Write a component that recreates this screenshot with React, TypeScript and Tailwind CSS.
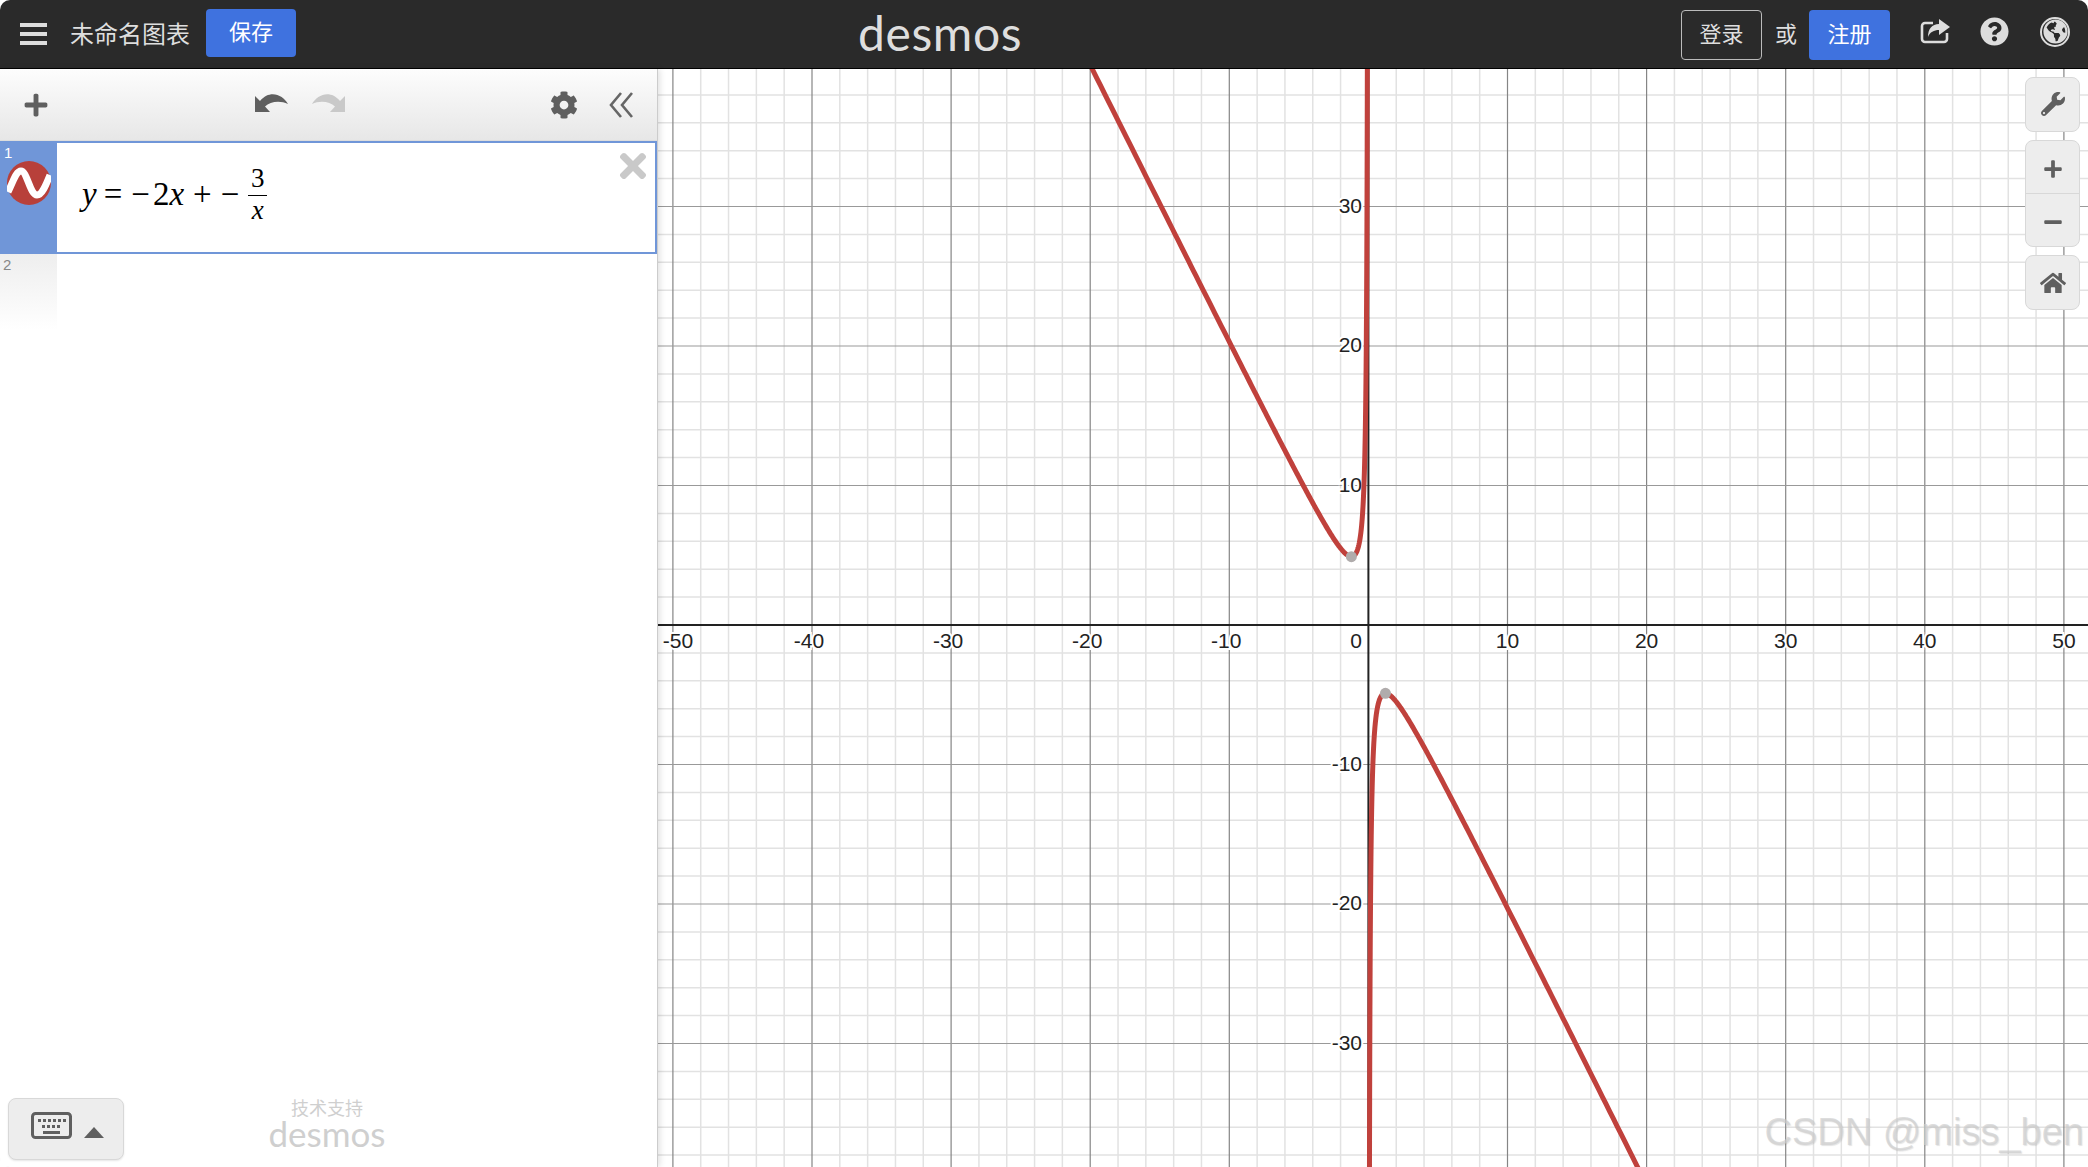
import { FaCog, FaHome, FaMinus, FaPlus, FaQuestionCircle, FaTimes, FaWrench, FaGlobeAmericas } from "react-icons/fa";

const X0 = 1368.4;
const Y0 = 625;
const SX = 13.91;
const SY = 13.95;

const px = (v: number) => X0 + v * SX;
const py = (v: number) => Y0 - v * SY;
const f = (x: number) => -2 * x - 3 / x;

function range(from: number, to: number, step: number) {
  const out: number[] = [];
  for (let v = from; v <= to; v += step) out.push(v);
  return out;
}

function branch(start: number, end: number) {
  // geometric steps, the curve bends hard near zero
  const pts: string[] = [];
  const n = 400;
  for (let i = 0; i <= n; i++) {
    const x = start * Math.pow(end / start, i / n);
    pts.push(`${px(x).toFixed(2)},${py(f(x)).toFixed(2)}`);
  }
  return "M" + pts.join("L");
}

function Graph() {
  const minorX = range(-50, 50, 2).filter((v) => v % 10 !== 0);
  const minorY = range(-38, 38, 2).filter((v) => v % 10 !== 0);
  const majorX = range(-50, 50, 10).filter((v) => v !== 0);
  const majorY = [-30, -20, -10, 10, 20, 30];
  const label = { fontFamily: "Liberation Sans, sans-serif", fontSize: 21, fill: "#222", stroke: "#fff", strokeWidth: 4, paintOrder: "stroke" } as const;

  return (
    <svg className="block w-full h-full" viewBox="658 69 1430 1098">
      <rect x="658" y="69" width="1430" height="1098" fill="#fff" />
      {minorX.map((v) => (
        <line key={v} x1={px(v)} x2={px(v)} y1="69" y2="1167" stroke="#e2e2e2" strokeWidth="1.5" />
      ))}
      {minorY.map((v) => (
        <line key={v} y1={py(v)} y2={py(v)} x1="658" x2="2088" stroke="#e2e2e2" strokeWidth="1.5" />
      ))}
      {majorX.map((v) => (
        <line key={v} x1={px(v)} x2={px(v)} y1="69" y2="1167" stroke="#858585" strokeWidth="1.2" />
      ))}
      {majorY.map((v) => (
        <line key={v} y1={py(v)} y2={py(v)} x1="658" x2="2088" stroke="#999999" strokeWidth="1.2" />
      ))}
      <line x1="658" x2="2088" y1={Y0} y2={Y0} stroke="#222" strokeWidth="2" />
      <line x1={X0} x2={X0} y1="69" y2="1167" stroke="#222" strokeWidth="2" />

      {majorX.map((v) => (
        <text key={v} x={v === -50 ? 678 : v < 0 ? px(v) - 3 : px(v)} y="648" textAnchor="middle" {...label}>
          {v}
        </text>
      ))}
      <text x="1356" y="648" textAnchor="middle" {...label}>0</text>
      {majorY.map((v) => (
        <text key={v} x="1362" y={py(v) + 6} textAnchor="end" {...label}>
          {v}
        </text>
      ))}

      <path d={branch(-21, -0.07)} fill="none" stroke="#c0413c" strokeWidth="5" />
      <path d={branch(0.07, 32)} fill="none" stroke="#c0413c" strokeWidth="5" />
      <circle cx={px(-1.2247)} cy={py(4.899)} r="5.5" fill="#b0acac" />
      <circle cx={px(1.2247)} cy={py(-4.899)} r="5.5" fill="#b0acac" />
    </svg>
  );
}

function Chevrons() {
  return (
    <svg width="26" height="28" viewBox="0 0 26 28" fill="none" stroke="#666" strokeWidth="2.6">
      <path d="M13 2 3 14l10 12" />
      <path d="M24 2 14 14l10 12" />
    </svg>
  );
}

function UndoIcon({ className }: { className?: string }) {
  return (
    <svg width="33" height="20" viewBox="0 0 33 20" fill="currentColor" className={className}>
      <path d="M0 4V20H15L10 14.5C15 9.5 25 8 33 12 28 3 15-3 5 9Z" />
    </svg>
  );
}

function ShareIcon() {
  return (
    <svg width="30" height="25" viewBox="0 0 30 25" className="text-[#ddd]">
      <path d="M13 4H5a3 3 0 0 0-3 3v13a3 3 0 0 0 3 3h19a3 3 0 0 0 3-3v-6" fill="none" stroke="currentColor" strokeWidth="2.6" />
      <path d="M19 0 30 8 19 16V11C14 11 10 13 8 18 8 10 12 5 19 5Z" fill="currentColor" />
    </svg>
  );
}

function FnIcon() {
  return (
    <svg width="44" height="44" viewBox="0 0 44 44" className="mx-auto">
      <circle cx="22" cy="22" r="22" fill="#b8403a" />
      <path d="M1 31C6 21 9 10 14 10c6 0 9 24 16 24 5 0 9-10 13-20" fill="none" stroke="#fff" strokeWidth="7" />
    </svg>
  );
}

function KeyboardIcon() {
  return (
    <svg width="41" height="27" viewBox="0 0 41 27">
      <rect x="1.5" y="1.5" width="38" height="24" rx="3" fill="none" stroke="#5f5f5f" strokeWidth="3" />
      {[7, 12, 17, 22, 27, 32].map((x) => (
        <rect key={x} x={x} y="7" width="3" height="3" fill="#5f5f5f" />
      ))}
      {[11, 16, 21, 26].map((x) => (
        <rect key={x} x={x} y="13" width="3" height="3" fill="#5f5f5f" />
      ))}
      <rect x="12" y="19" width="17" height="3" fill="#5f5f5f" />
    </svg>
  );
}

function Expression() {
  return (
    <div className="flex items-center ml-[25px] mt-[-6px] text-[33px] text-black font-['Liberation_Serif',serif] leading-none">
      <i>y</i>
      <span className="ml-[7px]">=</span>
      <span className="ml-[9px]">−</span>
      <span className="ml-[3px]">2</span>
      <i>x</i>
      <span className="ml-[9px]">+</span>
      <span className="ml-[9px]">−</span>
      <div className="ml-[9px] flex flex-col items-center w-[19px]">
        <span className="text-[27px] pb-[3px]">3</span>
        <div className="w-full h-px bg-black" />
        <i className="text-[27px] pt-[1px]">x</i>
      </div>
    </div>
  );
}

function MapButton({ children, className }: { children: React.ReactNode; className?: string }) {
  return <div className={`w-full flex items-center justify-center text-[#5f5f5f] ${className ?? ""}`}>{children}</div>;
}

export default function App() {
  return (
    <div className="w-[2088px] h-[1167px] flex flex-col overflow-hidden rounded-[10px] bg-white font-['Liberation_Sans','Noto_Sans_CJK_SC',sans-serif]">
      <header className="relative h-[69px] shrink-0 flex items-center bg-[#2a2a2a] border-b border-black text-[#dedede]">
        <div className="ml-[20px] w-[27px] flex flex-col gap-[5px]">
          <div className="h-[4px] bg-[#ddd]" />
          <div className="h-[4px] bg-[#ddd]" />
          <div className="h-[4px] bg-[#ddd]" />
        </div>
        <span className="ml-[23px] mt-[1px] text-[24px]">未命名图表</span>
        <button className="ml-[16px] w-[90px] h-[48px] mt-[-3px] rounded-[4px] bg-[#3f72df] text-white text-[22px]">保存</button>

        <div className="absolute left-[858px] top-[8px] text-[48px] leading-[50px] tracking-[0.6px] text-[#dedede] font-['Lato',sans-serif]">desmos</div>

        <div className="ml-auto flex items-center mt-[1px]">
          <button className="w-[81px] h-[50px] rounded-[4px] border border-[#bbb] text-[22px]">登录</button>
          <span className="ml-[13px] text-[22px]">或</span>
          <button className="ml-[12px] w-[81px] h-[50px] rounded-[4px] bg-[#3f72df] text-white text-[22px]">注册</button>
          <div className="ml-[30px] mt-[-6px]">
            <ShareIcon />
          </div>
          <FaQuestionCircle className="ml-[30px] mt-[-6px] text-[#ddd]" size={29} />
          <div className="ml-[31px] mr-[18px] mt-[-6px] w-[30px] h-[30px] rounded-full border-2 border-[#ddd] flex items-center justify-center">
            <FaGlobeAmericas className="text-[#ddd]" size={25} />
          </div>
        </div>
      </header>

      <main className="flex-1 min-h-0 flex">
        <aside className="relative z-10 w-[658px] shrink-0 flex flex-col bg-white border-r border-[#ccc] shadow-[2px_0_6px_rgba(0,0,0,0.12)]">
          <div className="h-[72px] shrink-0 flex items-center bg-linear-to-b from-[#fdfdfd] to-[#e7e7e7] border-b border-[#ddd] text-[#5f5f5f]">
            <FaPlus className="ml-[23px]" size={26} />
            <UndoIcon className="ml-[206px] mt-[-5px]" />
            <UndoIcon className="ml-[24px] mt-[-5px] -scale-x-100 text-[#c9c9c9]" />
            <FaCog className="ml-[205px]" size={28} />
            <div className="ml-[30px]">
              <Chevrons />
            </div>
          </div>

          <div className="h-[113px] shrink-0 flex border-2 border-l-0 border-[#7096d8]">
            <div className="w-[57px] shrink-0 bg-[#7096d8] text-white text-[15px] leading-[16px]">
              <div className="pl-[4px] pt-[2px]">1</div>
              <FnIcon />
            </div>
            <div className="flex-1 flex items-center justify-between">
              <Expression />
              <FaTimes className="mb-[64px] mr-[3px] text-[#c9c9c9]" size={38} />
            </div>
          </div>

          <div className="h-[76px] w-[57px] shrink-0 bg-linear-to-b from-[#eeeeee] to-white text-[#888] text-[15px] leading-[16px] pl-[3px] pt-[3px]">2</div>

          <div className="mt-auto h-[69px] flex items-start">
            <div className="ml-[8px] w-[116px] h-[62px] rounded-[8px] border border-[#d8d8d8] bg-[#ededed] shadow-[0_1px_2px_rgba(0,0,0,0.1)] flex items-center">
              <div className="ml-[22px] mt-[-7px]">
                <KeyboardIcon />
              </div>
              <div className="ml-[12px] mt-[6px] w-0 h-0 border-x-[10px] border-x-transparent border-b-[11px] border-b-[#5f5f5f]" />
            </div>
            <div className="ml-[143px] w-[120px] mt-[2px] flex flex-col items-center text-[#cfcfcf]">
              <span className="text-[18px] leading-[18px]">技术支持</span>
              <span className="text-[35px] leading-[30px] font-['Lato',sans-serif]">desmos</span>
            </div>
          </div>
        </aside>

        <section className="relative flex-1 min-w-0">
          <Graph />

          <div className="absolute right-[8px] top-[8px] w-[55px] flex flex-col gap-[8px]">
            <MapButton className="h-[55px] rounded-[8px] border border-[#d8d8d8] bg-[#ededed] pb-[2px]">
              <FaWrench size={24} />
            </MapButton>
            <div className="rounded-[8px] border border-[#d8d8d8] bg-[#ededed]">
              <MapButton className="h-[53px] border-b border-[#d8d8d8] pt-[3px]">
                <FaPlus size={20} />
              </MapButton>
              <MapButton className="h-[52px] pt-[3px]">
                <FaMinus size={20} />
              </MapButton>
            </div>
            <MapButton className="h-[55px] rounded-[8px] border border-[#d8d8d8] bg-[#ededed]">
              <FaHome size={26} />
            </MapButton>
          </div>

          <div className="absolute right-[4px] bottom-[12px] text-[38px] leading-[46px] text-[#cfcfcf]/70 [text-shadow:1px_1px_1px_rgba(120,120,120,0.2)]">
            CSDN @miss_ben
          </div>
        </section>
      </main>
    </div>
  );
}
